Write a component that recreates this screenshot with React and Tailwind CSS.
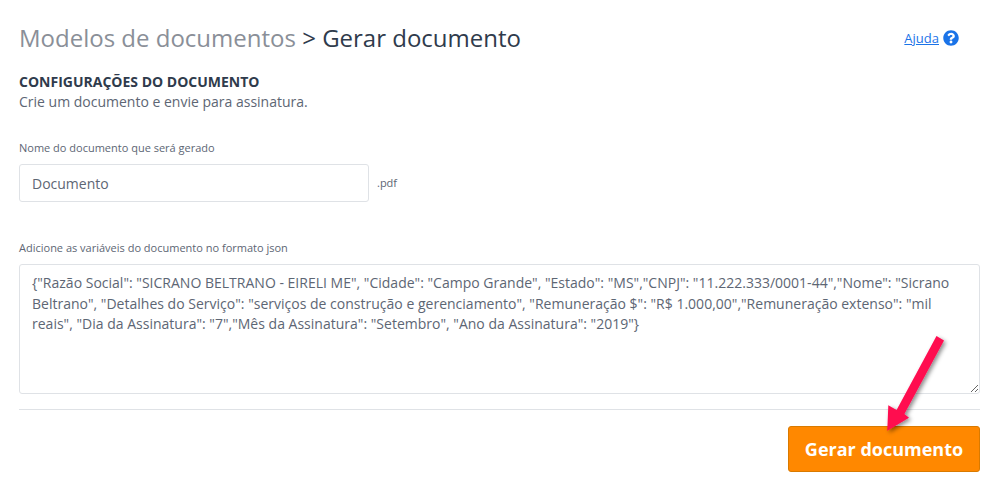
import React from 'react';
import { FaQuestionCircle } from 'react-icons/fa';

const json = `{"Razão Social": "SICRANO BELTRANO - EIRELI ME", "Cidade": "Campo Grande", "Estado": "MS","CNPJ": "11.222.333/0001-44","Nome": "Sicrano Beltrano", "Detalhes do Serviço": "serviços de construção e gerenciamento", "Remuneração $": "R$ 1.000,00","Remuneração extenso": "mil reais", "Dia da Assinatura": "7","Mês da Assinatura": "Setembro", "Ano da Assinatura": "2019"}`;

export default function App() {
  return (
    <div className="relative h-[489px] w-[998px] overflow-hidden bg-white pl-[19px] pr-[18px] pt-[22px] font-['Open_Sans',sans-serif] text-[#2f3b4c]">
      {/* Header */}
      <div className="flex items-center justify-between">
        <h1 className="text-[24px] leading-[32px] font-normal">
          <span className="text-[#8a8f98]">Modelos de documentos</span> &gt; Gerar documento
        </h1>
        <div className="mr-[21px] flex items-center gap-[4px]">
          <a href="#" className="text-[13px] leading-[18px] text-[#1a73e8] underline">Ajuda</a>
          <FaQuestionCircle size={16} className="text-[#1a73e8]" />
        </div>
      </div>

      <div className="mt-[18px]">
        <h2 className="text-[14px] leading-[19px] font-bold uppercase">Configurações do documento</h2>
        <p className="mt-[1px] text-[14px] leading-[20px] text-[#5d6674]">Crie um documento e envie para assinatura.</p>
      </div>

      {/* Nome */}
      <label className="mt-[28px] block text-[11px] leading-[16px] text-[#5d6674]">Nome do documento que será gerado</label>
      <div className="mt-[8px] flex items-center">
        <input
          defaultValue="Documento"
          className="h-[38px] w-[350px] rounded-[3px] border border-[#dfe2e6] px-[12px] text-[14px] text-[#5d6674] outline-none"
        />
        <span className="ml-[8px] mt-[1px] text-[11px] text-[#5d6674]">.pdf</span>
      </div>

      {/* Variaveis */}
      <label className="mt-[38px] block text-[11px] leading-[16px] text-[#5d6674]">Adicione as variáveis do documento no formato json</label>
      <textarea
        defaultValue={json}
        className="mt-[8px] block h-[130px] w-[961px] rounded-[3px] border border-[#dfe2e6] px-[12px] py-[8px] text-[14px] leading-[20.5px] tracking-[0.008px] text-[#5d6674] outline-none"
      />

      <div className="mt-[15px] h-px w-[961px] bg-[#dfe2e6]" />

      <div className="mt-[16px] flex w-[961px] justify-end">
        <button className="h-[46px] w-[192px] rounded-[3px] border border-[#d97a00] bg-[#ff8800] text-[18px] font-bold text-white">
          Gerar documento
        </button>
      </div>

      {/* Arrow annotation */}
      <svg className="absolute left-[870px] top-[325px]" width="90" height="120" viewBox="0 0 90 120">
        <defs>
          <filter id="arrowShadow" x="-30%" y="-30%" width="160%" height="160%">
            <feDropShadow dx="2" dy="2" stdDeviation="2" floodColor="#000" floodOpacity="0.45" />
          </filter>
        </defs>
        <g filter="url(#arrowShadow)">
          <path d="M66.5 11 L74 15.5 L34.4 89 L39 92.7 L17.3 105.7 L18.3 80.3 L26.6 85 Z" fill="#ff0a50" />
        </g>
      </svg>
    </div>
  );
}
